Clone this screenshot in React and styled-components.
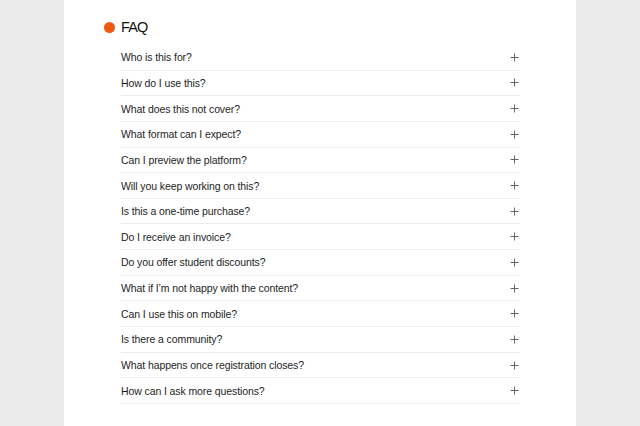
import React from "react";
import styled, { createGlobalStyle } from "styled-components";

const GlobalStyle = createGlobalStyle`
  html, body {
    margin: 0;
    padding: 0;
    background: #ebebeb;
    font-family: "Liberation Sans", Arial, sans-serif;
  }
`;

const Page = styled.div`
  display: flex;
  justify-content: center;
  min-height: 426px;
`;

const Panel = styled.main`
  width: 512px;
  min-height: 426px;
  background: #fff;
  box-sizing: border-box;
  padding: 16px 56px 0 57px;
`;

const Heading = styled.h2`
  display: flex;
  align-items: center;
  gap: 6px;
  margin: 0 0 0 -17px;
  height: 22px;
  font-size: 14.5px;
  font-weight: 400;
  color: #111;
  letter-spacing: -0.9px;
`;

const Dot = styled.span`
  width: 11px;
  height: 11px;
  border-radius: 50%;
  background: #ec5a12;
`;

const List = styled.ul`
  list-style: none;
  margin: 7px 0 0;
  padding: 0;
`;

const Row = styled.li`
  display: flex;
  align-items: center;
  justify-content: space-between;
  height: 24.65px;
  border-bottom: 1px solid #ececec;
  font-size: 10.5px;
  color: #1e1e1e;
  letter-spacing: -0.1px;
`;

const Plus = () => (
  <svg width="9" height="9" viewBox="0 0 9 9" style={{ marginRight: 1 }}>
    <path d="M4.5 0.5v8M0.5 4.5h8" stroke="#666" strokeWidth="1" fill="none" />
  </svg>
);

const questions = [
  "Who is this for?",
  "How do I use this?",
  "What does this not cover?",
  "What format can I expect?",
  "Can I preview the platform?",
  "Will you keep working on this?",
  "Is this a one-time purchase?",
  "Do I receive an invoice?",
  "Do you offer student discounts?",
  "What if I’m not happy with the content?",
  "Can I use this on mobile?",
  "Is there a community?",
  "What happens once registration closes?",
  "How can I ask more questions?",
];

const App = () => (
  <Page>
    <GlobalStyle />
    <Panel>
      <Heading>
        <Dot />
        FAQ
      </Heading>
      <List>
        {questions.map((q) => (
          <Row key={q}>
            <span>{q}</span>
            <Plus />
          </Row>
        ))}
      </List>
    </Panel>
  </Page>
);

export default App;
